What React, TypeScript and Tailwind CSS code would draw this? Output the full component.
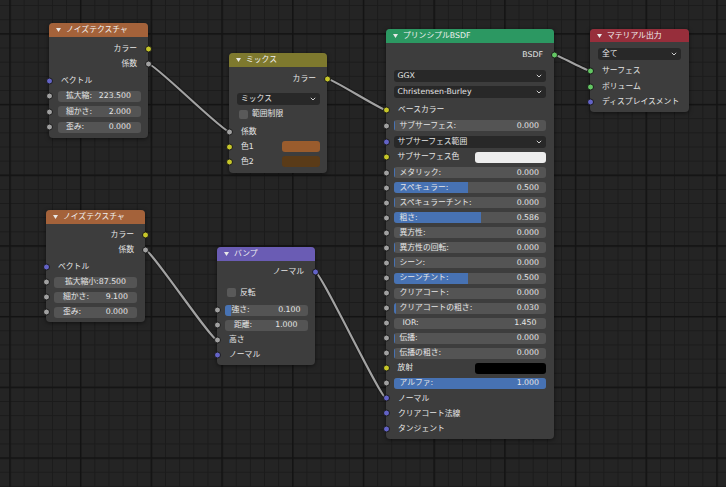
import React from "react";

const Y = "bg-[#c7c729]";
const G = "bg-[#a1a1a1]";
const P = "bg-[#6363c7]";
const N = "bg-[#63c763]";

function Socket({ color, right }: { color: string; right?: boolean }) {
  return (
    <span
      className={`absolute top-1/2 -translate-y-1/2 w-[7px] h-[7px] rounded-full border border-[#1b1b1b] ${right ? "right-[-3.5px]" : "left-[-3.5px]"} ${color}`}
    />
  );
}

function Row({ h, s, right, className = "", children }: { h: string; s?: string; right?: boolean; className?: string; children?: React.ReactNode }) {
  return (
    <div className={`relative flex items-center ${h} ${className}`}>
      {s && <Socket color={s} right={right} />}
      {children}
    </div>
  );
}

function Out({ h, s, children }: { h: string; s: string; children: React.ReactNode }) {
  return (
    <Row h={h} s={s} right className="justify-end pr-[11px]">
      <span>{children}</span>
    </Row>
  );
}

function In({ h, s, children }: { h: string; s?: string; children: React.ReactNode }) {
  return (
    <Row h={h} s={s} className="pl-[12px]">
      <span>{children}</span>
    </Row>
  );
}

function Field({ label, value, frac, line, cls = "pl-[6px] pr-[7px]", center }: { label: string; value?: string; frac?: number; line?: boolean; cls?: string; center?: boolean }) {
  return (
    <div className={`relative flex-1 h-[11px] rounded-[3px] bg-[#545454] overflow-hidden flex items-center ${center ? "justify-center" : "justify-between"} ${cls}`}>
      {frac !== undefined && <div className="absolute inset-y-0 left-0 bg-[#4772b3]" style={{ width: `${frac * 100}%` }} />}
      {line && <div className="absolute inset-y-0 left-0 w-[1.5px] bg-[#4772b3]" />}
      <span className="relative">{label}</span>
      {value && <span className="relative">{value}</span>}
    </div>
  );
}

function Chevron() {
  return (
    <svg width="6" height="4" viewBox="0 0 6 4">
      <path d="M0.8 0.8L3 3L5.2 0.8" stroke="#cfcfcf" strokeWidth="1" fill="none" />
    </svg>
  );
}

function Drop({ label }: { label: string }) {
  return (
    <div className="flex-1 h-[12px] rounded-[3px] bg-[#282828] flex items-center justify-between pl-[4px] pr-[4px]">
      <span>{label}</span>
      <Chevron />
    </div>
  );
}

function Check({ label, className }: { label: string; className: string }) {
  return (
    <div className={`flex items-center h-[15px] ${className}`}>
      <span className="w-[9px] h-[9px] rounded-[2px] bg-[#595959] mr-[4px]" />
      <span>{label}</span>
    </div>
  );
}

function Node({ pos, head, hh, title, pt, pb, children }: { pos: string; head: string; hh: string; title: string; pt: string; pb: string; children: React.ReactNode }) {
  return (
    <div className={`absolute ${pos} rounded-[4px] bg-[#3d3d3d] shadow-[0_1px_4px_rgba(0,0,0,0.55)]`}>
      <div className={`flex items-center ${hh} ${head} rounded-t-[4px] pl-[7px] text-[#f2f2f2]`}>
        <svg width="5" height="4" viewBox="0 0 5 4" className="mr-[5px]">
          <path d="M0 0H5L2.5 4Z" fill="#e8e8e8" />
        </svg>
        <span>{title}</span>
      </div>
      <div className={`flex flex-col ${pt} ${pb}`}>{children}</div>
    </div>
  );
}

const wires: [number, number, number, number][] = [
  [148, 63.5, 229, 131.5],
  [327, 78.5, 386, 110],
  [145, 249.5, 217, 340],
  [315, 271.5, 386, 398],
  [554, 54.5, 590, 70.8],
];

function wirePath([x1, y1, x2, y2]: [number, number, number, number]) {
  const h = (x2 - x1) * 0.08;
  return `M${x1} ${y1} C${x1 + h} ${y1} ${x2 - h} ${y2} ${x2} ${y2}`;
}

export default function App() {
  return (
    <div className="relative w-[726px] h-[487px] overflow-hidden bg-[#242424] text-[#e6e6e6] text-[7.8px] leading-none [font-family:'DejaVu_Sans','Noto_Sans_CJK_JP',sans-serif]">
      <svg className="absolute inset-0" width="726" height="487">
        <defs>
          <pattern id="minor" x="9.5" y="33.4" width="14.14" height="14.14" patternUnits="userSpaceOnUse">
            <path d="M0 0.5H14.14M0.5 0V14.14" stroke="#1b1b1b" strokeWidth="1" fill="none" />
          </pattern>
          <pattern id="major" x="9.25" y="33.15" width="70.7" height="70.7" patternUnits="userSpaceOnUse">
            <path d="M0 0.75H70.7M0.75 0V70.7" stroke="#131313" strokeWidth="1.5" fill="none" />
          </pattern>
        </defs>
        <rect width="726" height="487" fill="#242424" />
        <rect width="726" height="487" fill="url(#minor)" />
        <rect width="726" height="487" fill="url(#major)" />
      </svg>

      <svg className="absolute inset-0" width="726" height="487">
        {wires.map((w, i) => (
          <g key={i}>
            <path d={wirePath(w)} stroke="#151515" strokeOpacity="0.7" strokeWidth="4" fill="none" />
            <path d={wirePath(w)} stroke="#a2a2a2" strokeWidth="2.2" fill="none" />
          </g>
        ))}
      </svg>

      <Node pos="left-[49px] top-[23px] w-[99px]" head="bg-[#a4623a]" hh="h-[14px]" title="ノイズテクスチャ" pt="pt-[4px]" pb="pb-[3px]">
        <Out h="h-[15px]" s={Y}>カラー</Out>
        <Out h="h-[15px]" s={G}>係数</Out>
        <div className="h-[2.5px]" />
        <In h="h-[15px]" s={P}>ベクトル</In>
        <Row h="h-[15.5px]" s={G} className="pl-[9px] pr-[7px]"><Field label="拡大縮:" value="223.500" cls="pl-[8px] pr-[10px]" /></Row>
        <Row h="h-[15.5px]" s={G} className="pl-[9px] pr-[7px]"><Field label="細かさ:" value="2.000" cls="pl-[8px] pr-[10px]" /></Row>
        <Row h="h-[15.5px]" s={G} className="pl-[9px] pr-[7px]"><Field label="歪み:" value="0.000" cls="pl-[8px] pr-[10px]" /></Row>
      </Node>

      <Node pos="left-[46px] top-[210px] w-[99px]" head="bg-[#a4623a]" hh="h-[14px]" title="ノイズテクスチャ" pt="pt-[3px]" pb="pb-[2.5px]">
        <Out h="h-[15px]" s={Y}>カラー</Out>
        <Out h="h-[15px]" s={G}>係数</Out>
        <div className="h-[3px]" />
        <In h="h-[14.5px]" s={P}>ベクトル</In>
        <Row h="h-[15px]" s={G} className="pl-[8px] pr-[8px]"><Field label="拡大縮小:87.500" center cls="px-[6px]" /></Row>
        <Row h="h-[15px]" s={G} className="pl-[8px] pr-[8px]"><Field label="細かさ:" value="9.100" cls="pl-[9px] pr-[9px]" /></Row>
        <Row h="h-[15px]" s={G} className="pl-[8px] pr-[8px]"><Field label="歪み:" value="0.000" cls="pl-[9px] pr-[9px]" /></Row>
      </Node>

      <Node pos="left-[229px] top-[53px] w-[98px]" head="bg-[#7e792e]" hh="h-[14px]" title="ミックス" pt="pt-[4px]" pb="pb-[3.5px]">
        <Out h="h-[15px]" s={Y}>カラー</Out>
        <div className="h-[5.5px]" />
        <Row h="h-[15px]" className="pl-[8px] pr-[7px]"><Drop label="ミックス" /></Row>
        <Check label="範囲制限" className="pl-[10px]" />
        <div className="h-[2.5px]" />
        <In h="h-[15px]" s={G}>係数</In>
        <Row h="h-[15px]" s={Y} className="pl-[12px] pr-[7px] justify-between">
          <span>色1</span>
          <span className="w-[38px] h-[11px] rounded-[3px] bg-[#9a5c2d]" />
        </Row>
        <Row h="h-[15px]" s={Y} className="pl-[12px] pr-[7px] justify-between">
          <span>色2</span>
          <span className="w-[38px] h-[11px] rounded-[3px] bg-[#5a3b18]" />
        </Row>
      </Node>

      <Node pos="left-[217px] top-[247px] w-[98px]" head="bg-[#6a5cb4]" hh="h-[14px]" title="バンプ" pt="pt-[3px]" pb="pb-[2px]">
        <Out h="h-[15px]" s={P}>ノーマル</Out>
        <div className="h-[6px]" />
        <Check label="反転" className="pl-[10px]" />
        <div className="h-[2.5px]" />
        <Row h="h-[15px]" s={G} className="pl-[8px] pr-[7.5px]"><Field label="強さ:" value="0.100" frac={0.07} cls="pl-[6.5px] pr-[7px]" /></Row>
        <Row h="h-[15px]" s={G} className="pl-[8px] pr-[7.5px]"><Field label="距離:" value="1.000" cls="pl-[9px] pr-[10px]" /></Row>
        <In h="h-[15px]" s={G}>高さ</In>
        <In h="h-[15px]" s={P}>ノーマル</In>
      </Node>

      <Node pos="left-[386px] top-[29px] w-[168px]" head="bg-[#2c9862]" hh="h-[14px]" title="プリンシプルBSDF" pt="pt-[4px]" pb="pb-[3px]">
        <Out h="h-[15px]" s={N}>BSDF</Out>
        <div className="h-[5.25px]" />
        <Row h="h-[16.5px]" className="pl-[7.5px] pr-[8px]"><Drop label="GGX" /></Row>
        <Row h="h-[16.5px]" className="pl-[7.5px] pr-[8px]"><Drop label="Christensen-Burley" /></Row>
        <div className="h-[2.2px]" />
        <In h="h-[15.7px]" s={Y}>ベースカラー</In>
        <Row h="h-[15.7px]" s={G} className="pl-[7.5px] pr-[8px]"><Field label="サブサーフェス:" value="0.000" line /></Row>
        <Row h="h-[15.7px]" s={P} className="pl-[7.5px] pr-[8px]"><Drop label="サブサーフェス範囲" /></Row>
        <Row h="h-[15.7px]" s={Y} className="pl-[11.5px] pr-[8px] justify-between">
          <span>サブサーフェス色</span>
          <span className="w-[71px] h-[11.5px] rounded-[3px] bg-[#ededed]" />
        </Row>
        <Row h="h-[15.05px]" s={G} className="pl-[7.5px] pr-[8px]"><Field label="メタリック:" value="0.000" line /></Row>
        <Row h="h-[15.05px]" s={G} className="pl-[7.5px] pr-[8px]"><Field label="スペキュラー:" value="0.500" frac={0.49} /></Row>
        <Row h="h-[15.05px]" s={G} className="pl-[7.5px] pr-[8px]"><Field label="スペキュラーチント:" value="0.000" line /></Row>
        <Row h="h-[15.05px]" s={G} className="pl-[7.5px] pr-[8px]"><Field label="粗さ:" value="0.586" frac={0.575} /></Row>
        <Row h="h-[15.05px]" s={G} className="pl-[7.5px] pr-[8px]"><Field label="異方性:" value="0.000" /></Row>
        <Row h="h-[15.05px]" s={G} className="pl-[7.5px] pr-[8px]"><Field label="異方性の回転:" value="0.000" line /></Row>
        <Row h="h-[15.05px]" s={G} className="pl-[7.5px] pr-[8px]"><Field label="シーン:" value="0.000" line /></Row>
        <Row h="h-[15.05px]" s={G} className="pl-[7.5px] pr-[8px]"><Field label="シーンチント:" value="0.500" frac={0.49} /></Row>
        <Row h="h-[15.05px]" s={G} className="pl-[7.5px] pr-[8px]"><Field label="クリアコート:" value="0.000" /></Row>
        <Row h="h-[15.05px]" s={G} className="pl-[7.5px] pr-[8px]"><Field label="クリアコートの粗さ:" value="0.030" frac={0.015} /></Row>
        <Row h="h-[15.05px]" s={G} className="pl-[7.5px] pr-[8px]"><Field label="IOR:" value="1.450" cls="pl-[9px] pr-[9.5px]" /></Row>
        <Row h="h-[15.05px]" s={G} className="pl-[7.5px] pr-[8px]"><Field label="伝播:" value="0.000" line /></Row>
        <Row h="h-[15.05px]" s={G} className="pl-[7.5px] pr-[8px]"><Field label="伝播の粗さ:" value="0.000" line /></Row>
        <Row h="h-[15.05px]" s={Y} className="pl-[11.5px] pr-[8px] justify-between">
          <span>放射</span>
          <span className="w-[71px] h-[11.5px] rounded-[3px] bg-black" />
        </Row>
        <Row h="h-[15.05px]" s={G} className="pl-[7.5px] pr-[8px]"><Field label="アルファ:" value="1.000" frac={1} /></Row>
        <In h="h-[15.05px]" s={P}>ノーマル</In>
        <In h="h-[15.05px]" s={P}>クリアコート法線</In>
        <In h="h-[15.05px]" s={P}>タンジェント</In>
      </Node>

      <Node pos="left-[590px] top-[29px] w-[99px]" head="bg-[#972e3b]" hh="h-[13px]" title="マテリアル出力" pt="pt-[4.7px]" pb="pb-[2px]">
        <Row h="h-[15px]" className="pl-[8px] pr-[8px]"><Drop label="全て" /></Row>
        <div className="h-[1.2px]" />
        <In h="h-[15.8px]" s={N}>サーフェス</In>
        <In h="h-[15.8px]" s={N}>ボリューム</In>
        <In h="h-[15.8px]" s={P}>ディスプレイスメント</In>
      </Node>
    </div>
  );
}
